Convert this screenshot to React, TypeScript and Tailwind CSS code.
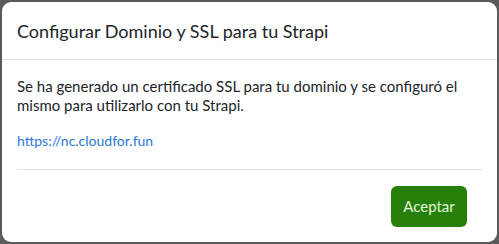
export default function App() {
  return (
    <div className="w-[499px] h-[244px] bg-[#5a5a5a] p-[2px] font-['Lato',sans-serif]">
      <div className="h-full bg-white rounded-[9px] flex flex-col">
        <div className="h-[58px] flex items-center px-[15px] border-b border-[#dee2e6]">
          <h1 className="text-[18px] text-[#212529] leading-none">Configurar Dominio y SSL para tu Strapi</h1>
        </div>
        <div className="px-[15px] pt-[17px]">
          <p className="text-[15px] leading-[19px] text-[#212529] pr-[6px]">
            Se ha generado un certificado SSL para tu dominio y se configuró el mismo para utilizarlo con tu Strapi.
          </p>
          <a className="block mt-[16px] text-[14px] leading-[20px] text-[#2a78d6]">https://nc.cloudfor.fun</a>
          <div className="mt-[18px] border-t border-[#dee2e6]" />
        </div>
        <div className="flex justify-end px-[30px] pt-[16px]">
          <button className="w-[76px] h-[41px] rounded-[6px] bg-[#267f08] text-[#e6f7dc] text-[15px]">Aceptar</button>
        </div>
      </div>
    </div>
  );
}
